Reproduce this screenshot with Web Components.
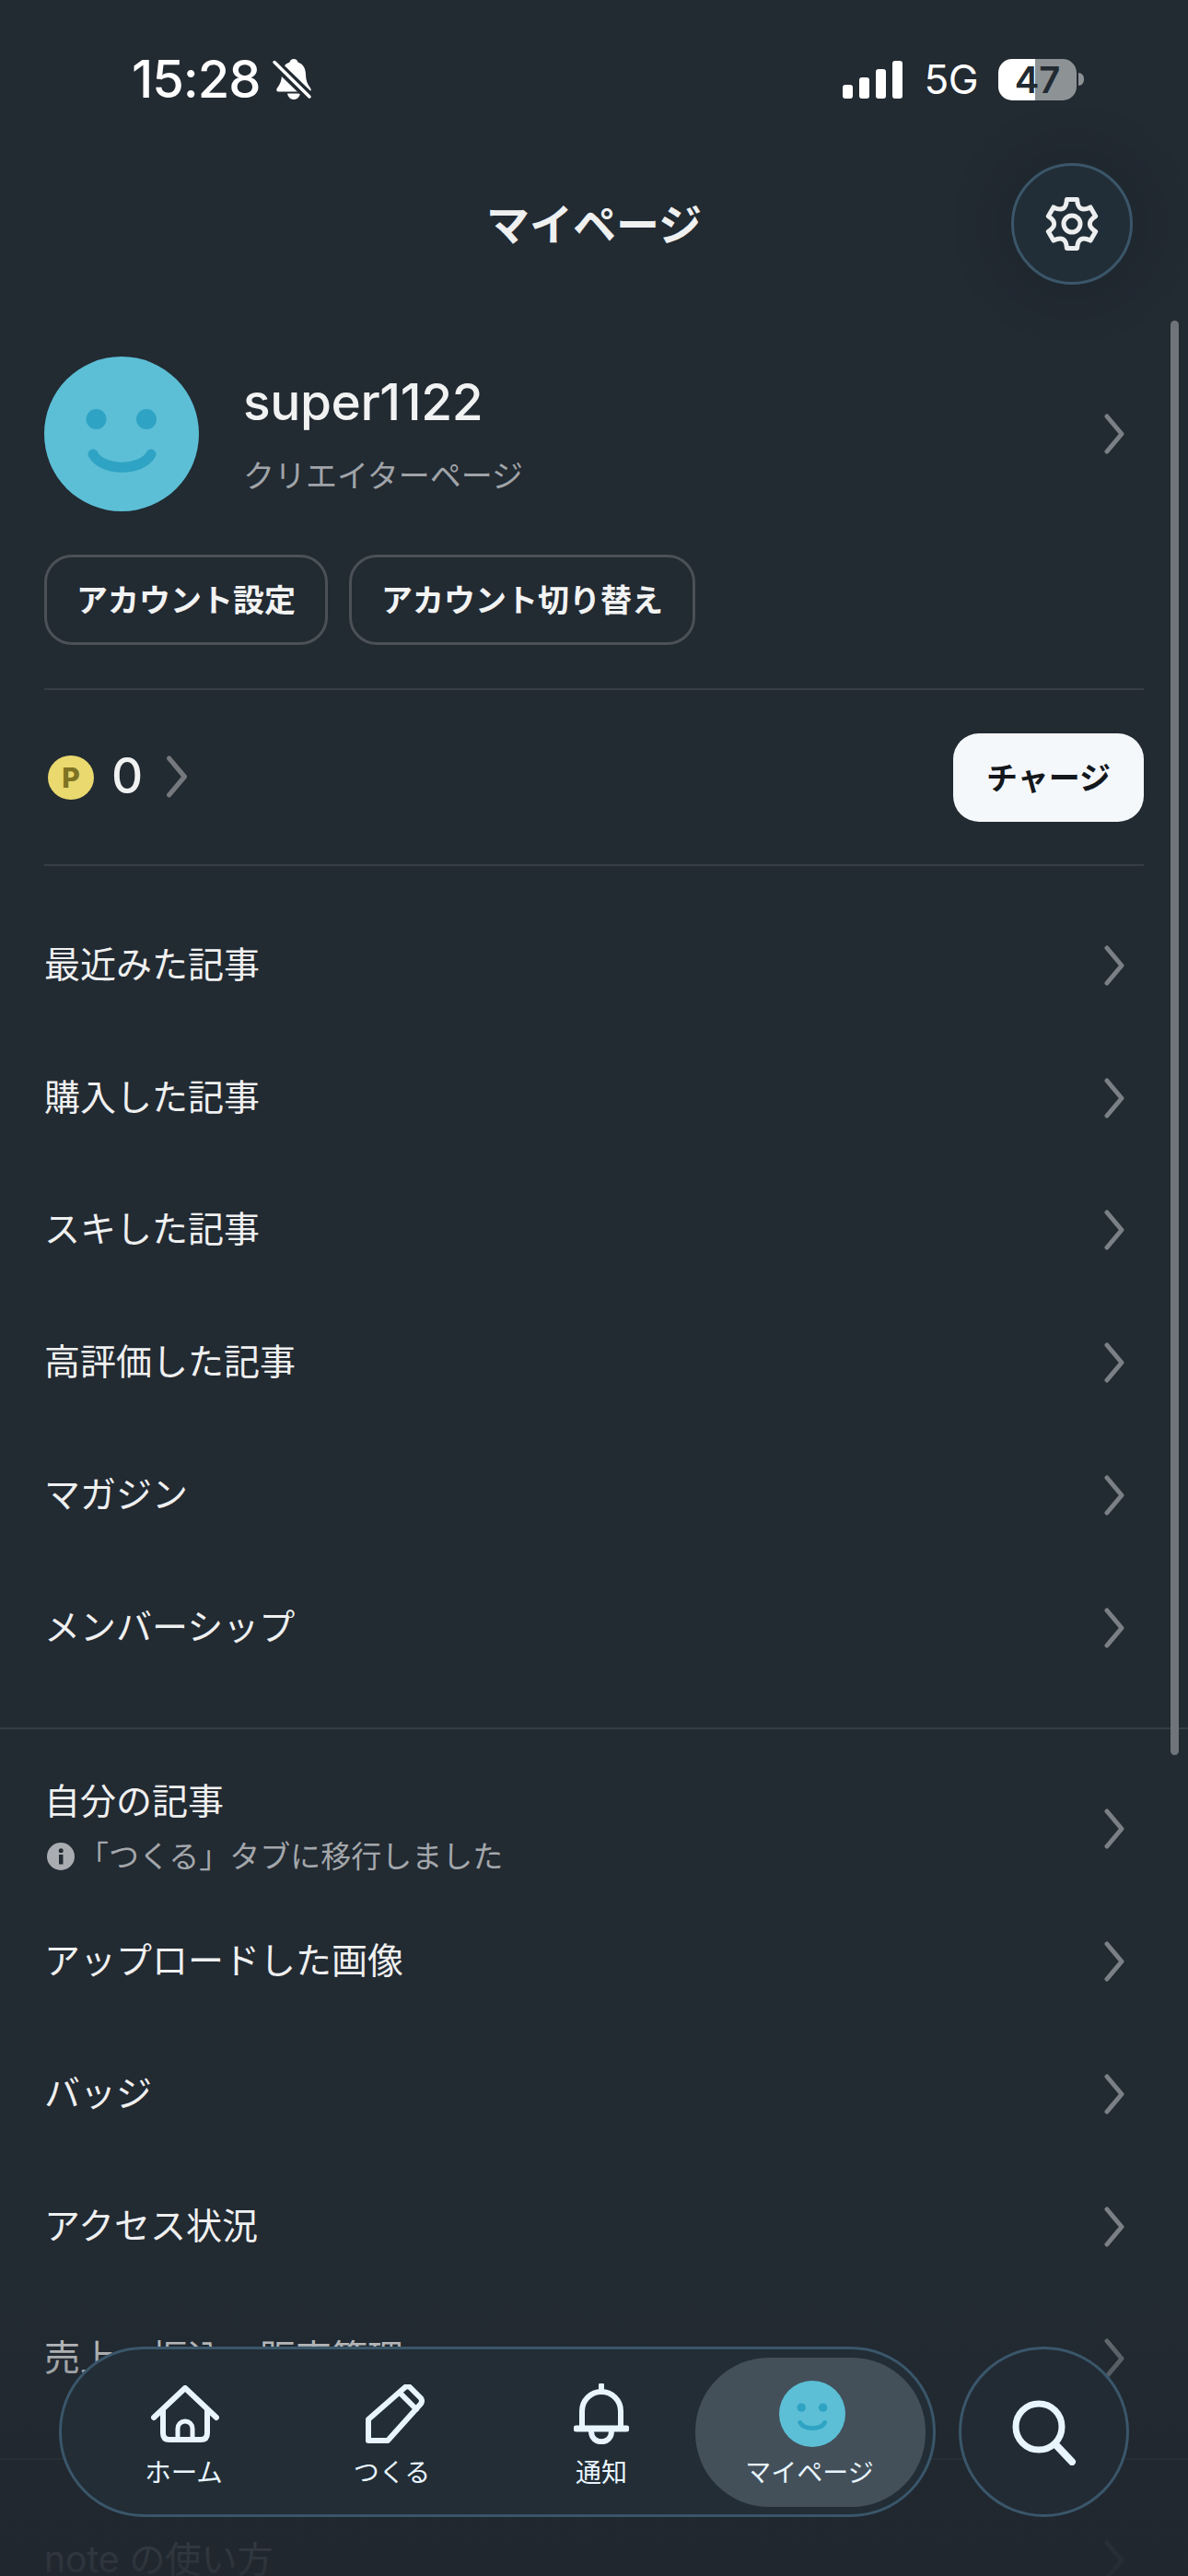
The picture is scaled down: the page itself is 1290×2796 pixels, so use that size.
<!DOCTYPE html>
<html lang="ja">
<head>
<meta charset="utf-8">
<title>マイページ</title>
<style>
  html, body { margin: 0; background: #222a32; }
  body {
    width: 1290px;
    height: 2796px;
    overflow: hidden;
    position: relative;
    color: #f0f1f1;
    font-family: Inter, "Noto Sans CJK JP", sans-serif;
  }
</style>
</head>
<body>
<status-bar></status-bar>
<page-header>マイページ</page-header>
<main-scroll>
  <profile-card name="super1122" sub="クリエイターページ"></profile-card>
  <point-row></point-row>
  <menu-list>
    <menu-row>最近みた記事</menu-row>
    <menu-row>購入した記事</menu-row>
    <menu-row>スキした記事</menu-row>
    <menu-row>高評価した記事</menu-row>
    <menu-row>マガジン</menu-row>
    <menu-row>メンバーシップ</menu-row>
  </menu-list>
  <menu-group>
    <menu-row note="「つくる」タブに移行しました">自分の記事</menu-row>
    <menu-row>アップロードした画像</menu-row>
    <menu-row>バッジ</menu-row>
    <menu-row>アクセス状況</menu-row>
    <menu-row>売上・振込・販売管理</menu-row>
  </menu-group>
  <menu-group>
    <menu-row>note の使い方</menu-row>
  </menu-group>
</main-scroll>
<scroll-thumb></scroll-thumb>
<bottom-fade></bottom-fade>
<bottom-nav></bottom-nav>

<script>
const CHEVRON = `<svg width="22" height="44" viewBox="0 0 22 44" fill="none" stroke="currentColor" stroke-width="5" stroke-linecap="round" stroke-linejoin="round"><path d="M3 3 L19 22 L3 41"/></svg>`;

const face = (size) => `
  <svg width="${size}" height="${size}" viewBox="0 0 168 168">
    <circle cx="84" cy="84" r="84" fill="#5cbfd6"/>
    <circle cx="56.500" cy="68" r="11" fill="#2fa3c4"/>
    <circle cx="111" cy="68" r="11" fill="#2fa3c4"/>
    <path d="M53 106 C63 125 106 125 116 106" fill="none" stroke="#2fa3c4" stroke-width="11" stroke-linecap="round"/>
  </svg>`;

// gear outline: six flat teeth with curved notches between them
function gearPath(cx, cy, R, ctrl) {
  const pt = (r, deg) => {
    const a = deg * Math.PI / 180;
    return `${(cx + r * Math.cos(a)).toFixed(2)} ${(cy + r * Math.sin(a)).toFixed(2)}`;
  };
  let d = `M${pt(R, -90 - 12)}`;
  for (let i = 0; i < 6; i++) {
    const a = -90 + 60 * i;
    d += ` L${pt(R, a + 12)} Q${pt(ctrl, a + 30)} ${pt(R, a + 48)}`;
  }
  return d + "Z";
}

class StatusBar extends HTMLElement {
  constructor() {
    super();
    this.attachShadow({ mode: "open" });
    this.shadowRoot.innerHTML = `
    <style>
      :host { display: flex; height: 160px; box-sizing: border-box; padding: 62px 113px 0 143px; justify-content: space-between; align-items: flex-start; color: #fff; }
      .left, .right { display: flex; align-items: center; }
      .time { font-size: 56px; font-weight: 500; line-height: 48px; letter-spacing: -1px; }
      .bell { margin-left: 12px; }
      .g5 { font-size: 44px; line-height: 48px; margin: 0 22px 0 23px; letter-spacing: -0.5px; }
      .battery { width: 85px; height: 45px; border-radius: 15px; background: linear-gradient(to right, #fff 40px, #8d9295 40px); color: #222a32; font-size: 40px; font-weight: 600; line-height: 45px; text-align: center; }
      .nub { width: 6px; height: 14px; margin-left: 2px; border-radius: 0 7px 7px 0; background: #8d9295; }
    </style>
    <div class="left">
      <span class="time">15:28</span>
      <svg class="bell" width="44" height="46" viewBox="0 0 44 46">
        <path d="M24 1c2.500 0 4 1.500 4.500 3.500C34.500 6.500 37 12 37 18c0 6 2 11 5 14.500 1.500 2 .5 4-1.500 4H7.500c-2 0-3-2-1.500-4C9 29 11 24 11 18c0-6 2.500-11.500 8.500-13.500C20 2.500 21.500 1 24 1z" fill="#fff"/>
        <path d="M17 38.500h14C30 43 27 45 24 45s-6-2-7-6.500z" fill="#fff"/>
        <path d="M2 4 L41 42" stroke="#222a32" stroke-width="10.500"/>
        <path d="M3 4.500 L41 42" stroke="#fff" stroke-width="3.500" stroke-linecap="round"/>
      </svg>
    </div>
    <div class="right">
      <svg width="65" height="41" viewBox="0 0 65 41" fill="#fff">
        <rect x="0" y="26" width="11" height="15" rx="3"/>
        <rect x="18" y="18" width="11" height="23" rx="3"/>
        <rect x="36" y="9" width="11" height="32" rx="3"/>
        <rect x="54" y="0" width="11" height="41" rx="3"/>
      </svg>
      <span class="g5">5G</span>
      <div class="battery">47</div>
      <div class="nub"></div>
    </div>
    `;
  }
}
customElements.define("status-bar", StatusBar);

class PageHeader extends HTMLElement {
  constructor() {
    super();
    this.attachShadow({ mode: "open" });
    this.shadowRoot.innerHTML = `
    <style>
      :host { display: grid; grid-template-columns: 1fr auto 1fr; align-items: center; height: 166px; padding: 0 60px; }
      .title { grid-column: 2; padding-bottom: 6px; font-size: 47px; font-weight: 700; color: #eff0f0; }
      button { grid-column: 3; justify-self: end; width: 132px; height: 132px; padding: 0; border-radius: 50%; border: 3px solid #3b5669; background: #222e37; color: #eceeef; display: flex; align-items: center; justify-content: center; box-shadow: 0 0 60px rgba(20,26,32,.35); }
    </style>
    <div class="title"><slot></slot></div>
    <button>
      <svg width="58" height="62" viewBox="0 0 58 62" fill="none" stroke="currentColor" stroke-width="5" stroke-linejoin="round">
        <path d="${gearPath(29, 31, 27, 13)}"/>
        <circle cx="29" cy="31" r="9"/>
      </svg>
    </button>
    `;
  }
}
customElements.define("page-header", PageHeader);

class MainScroll extends HTMLElement {
  constructor() {
    super();
    this.attachShadow({ mode: "open" });
    this.shadowRoot.innerHTML = `
    <style>
      :host { display: block; padding-top: 61px; }
    </style>
    <slot></slot>
    `;
  }
}
customElements.define("main-scroll", MainScroll);

class ProfileCard extends HTMLElement {
  constructor() {
    super();
    this.attachShadow({ mode: "open" });
    this.shadowRoot.innerHTML = `
    <style>
      :host { display: block; margin: 0 48px; }
      .top { display: flex; align-items: center; }
      .avatar { display: flex; width: 168px; height: 168px; }
      .text { flex: 1; margin-left: 48px; padding-top: 7px; }
      .name { margin-top: -4px; font-size: 55px; font-weight: 500; line-height: 64px; letter-spacing: -.4px; color: #f1f2f2; }
      .sub { margin-top: 25px; font-size: 34px; line-height: 48px; color: #a0a4a8; }
      .chev { display: flex; margin-right: 21px; color: #7b8086; }
      .buttons { display: flex; gap: 23px; margin-top: 47px; }
      button { height: 98px; padding: 0 32px 3px; box-sizing: border-box; border: 3px solid #4b5157; border-radius: 30px; background: none; color: #f2f3f3; font: 700 34px Inter, "Noto Sans CJK JP", sans-serif; }
    </style>
    <div class="top">
      <div class="avatar">${face(168)}</div>
      <div class="text">
        <div class="name">${this.getAttribute("name")}</div>
        <div class="sub">${this.getAttribute("sub")}</div>
      </div>
      <div class="chev">${CHEVRON}</div>
    </div>
    <div class="buttons">
      <button>アカウント設定</button>
      <button>アカウント切り替え</button>
    </div>
    `;
  }
}
customElements.define("profile-card", ProfileCard);

class PointRow extends HTMLElement {
  constructor() {
    super();
    this.attachShadow({ mode: "open" });
    this.shadowRoot.innerHTML = `
    <style>
      :host { display: flex; align-items: center; height: 189px; margin: 47px 48px 0; border-top: 2px solid #373e45; border-bottom: 2px solid #373e45; }
      .coin { width: 50px; height: 48px; margin-left: 4px; border-radius: 50%; background: #e9d96e; color: #7e7322; font-size: 30px; font-weight: 800; line-height: 48px; text-align: center; }
      .num { margin: -4px 0 0 19px; font-size: 53px; font-weight: 500; line-height: 64px; color: #f0f1f1; }
      .chev { display: flex; margin: -2px 0 0 25px; color: #75797d; }
      .chev svg { width: 24px; height: 46px; }
      button { margin-left: auto; width: 207px; height: 96px; padding-bottom: 4px; border: 0; border-radius: 28px; background: #f5f8fb; color: #14181c; font: 700 34px Inter, "Noto Sans CJK JP", sans-serif; }
    </style>
    <div class="coin">P</div>
    <div class="num">0</div>
    <div class="chev">${CHEVRON}</div>
    <button>チャージ</button>
    `;
  }
}
customElements.define("point-row", PointRow);

class MenuList extends HTMLElement {
  constructor() {
    super();
    this.attachShadow({ mode: "open" });
    this.shadowRoot.innerHTML = `
    <style>
      :host { display: block; padding-top: 36px; }
    </style>
    <slot></slot>
    `;
  }
}
customElements.define("menu-list", MenuList);

class MenuRow extends HTMLElement {
  constructor() {
    super();
    this.attachShadow({ mode: "open" });
    const note = this.getAttribute("note");
    this.shadowRoot.innerHTML = `
    <style>
      :host { display: flex; align-items: center; height: 143.750px; margin: 0 48px; font-size: 39px; color: #eff0f0; }
      .label { flex: 1; padding-bottom: 2px; }
      .top { line-height: 50px; }
      .note { display: flex; align-items: center; margin-top: 12px; font-size: 33px; line-height: 46px; color: #a3a7ab; }
      .note svg { margin: 0 4px 0 3px; flex: none; }
      .chev { display: flex; margin-right: 21px; color: #7b8086; }
    </style>
    <div class="label">
      <div class="top"><slot></slot></div>
      ${note ? `<div class="note">
        <svg width="30" height="30" viewBox="0 0 30 30"><circle cx="15" cy="15" r="15" fill="#a9adb1"/><rect x="13" y="13" width="4.500" height="10.500" fill="#222a32"/><circle cx="15.200" cy="8.800" r="2.500" fill="#222a32"/></svg>
        <span>${note}</span></div>` : ""}
    </div>
    <div class="chev">${CHEVRON}</div>
    `;
  }
}
customElements.define("menu-row", MenuRow);

class MenuGroup extends HTMLElement {
  constructor() {
    super();
    this.attachShadow({ mode: "open" });
    this.shadowRoot.innerHTML = `
    <style>
      :host { display: block; margin-top: 36px; padding-top: 37px; border-top: 2px solid #373e45; }
    </style>
    <slot></slot>
    `;
  }
}
customElements.define("menu-group", MenuGroup);

class ScrollThumb extends HTMLElement {
  constructor() {
    super();
    this.attachShadow({ mode: "open" });
    this.shadowRoot.innerHTML = `
    <style>
      :host { position: absolute; left: 1271px; top: 348px; width: 9px; height: 1557px; border-radius: 5px; background: #6e7479; }
    </style>
    `;
  }
}
customElements.define("scroll-thumb", ScrollThumb);

class BottomFade extends HTMLElement {
  constructor() {
    super();
    this.attachShadow({ mode: "open" });
    this.shadowRoot.innerHTML = `
    <style>
      :host { position: absolute; left: 0; right: 0; bottom: 0; height: 340px; background: linear-gradient(to bottom, rgba(32,39,47,0), rgba(32,39,47,.85) 75%, rgba(32,39,47,.95)); }
    </style>
    `;
  }
}
customElements.define("bottom-fade", BottomFade);

class BottomNav extends HTMLElement {
  constructor() {
    super();
    this.attachShadow({ mode: "open" });
    const stroke = `fill="none" stroke="#e8f5ff" stroke-linecap="round" stroke-linejoin="round"`;
    const items = [
      ["ホーム", `<svg width="74" height="62" viewBox="0 0 74 62" ${stroke} stroke-width="6"><path d="M3 35 L37 3 L71 35"/><path d="M13 27 V52 Q13 59 20 59 H54 Q61 59 61 52 V27"/><path d="M29 59 V47 A8 8 0 0 1 45 47 V59" stroke-width="5"/></svg>`],
      ["つくる", `<svg width="64" height="64" viewBox="0 0 64 64" ${stroke} stroke-width="6"><path d="M3 61 V38 L43 3 Q46 1 49 4 L60 15 Q62 18 60 21 L24 61 Z"/><path d="M37 9 L55 27" /></svg>`],
      ["通知", `<svg width="60" height="66" viewBox="0 0 60 66" ${stroke} stroke-width="6"><path d="M30 2 V9"/><path d="M9 47 V30 A21 21 0 0 1 51 30 V47"/><path d="M3 49 H57" stroke-width="7"/><path d="M19 52 C19 67 41 67 41 52" stroke-width="6"/></svg>`],
    ];
    this.shadowRoot.innerHTML = `
    <style>
      :host { position: absolute; left: 64px; top: 2547px; width: 1162px; height: 185px; display: flex; justify-content: space-between; color: #e8f5ff; }
      .bar { box-sizing: border-box; width: 952px; height: 185px; padding: 0 21px; display: grid; grid-template-columns: repeat(4, 226px); border: 3px solid #3a566a; border-radius: 92px; background: #222d36; }
      .item { position: relative; display: flex; flex-direction: column; align-items: center; }
      .item:nth-child(1) .label { margin-left: -3px; font-size: 28.500px; }
      .item:nth-child(2) .icon { margin-left: 3px; }
      .item:nth-child(2) .label { margin-left: -3px; }
      .icon { height: 84px; margin-top: 28px; display: flex; align-items: center; justify-content: center; }
      .label { position: relative; margin-top: 4px; font-size: 28px; line-height: 36px; }
      .item.active::before { content: ""; position: absolute; left: -11px; right: -13px; top: 9px; height: 162px; border-radius: 80px; background: #43505a; }
      .item.active .icon { position: relative; left: 3px; }
      .search { box-sizing: border-box; width: 185px; height: 185px; border-radius: 50%; border: 3px solid #3a566a; background: #222b34; display: flex; align-items: center; justify-content: center; }
    </style>
    <div class="bar">
      ${items.map(([label, svg]) => `<div class="item"><div class="icon">${svg}</div><div class="label">${label}</div></div>`).join("")}
      <div class="item active"><div class="icon">${face(72)}</div><div class="label">マイページ</div></div>
    </div>
    <div class="search">
      <svg width="72" height="72" viewBox="0 0 72 72" ${stroke} stroke-width="7"><circle cx="30" cy="30" r="25"/><path d="M48 49 L66 68" stroke-width="8"/></svg>
    </div>
    `;
  }
}
customElements.define("bottom-nav", BottomNav);
</script>
</body>
</html>
